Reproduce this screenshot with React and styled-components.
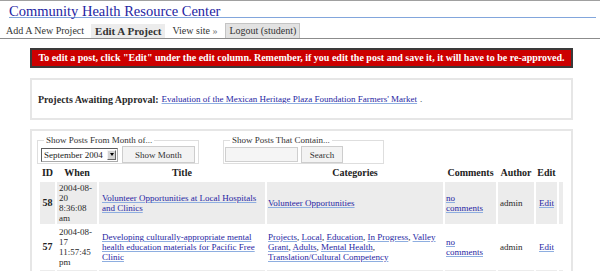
import React from 'react';
import styled, { createGlobalStyle } from 'styled-components';

const SerifStack = '"Liberation Serif", "DejaVu Serif", serif';
const LinkColor = '#1f1fa3';
const LinkLine = '#8eaee0';
const RowGray = '#ececec';

const GlobalStyle = createGlobalStyle`
  html, body {
    margin: 0;
    padding: 0;
    background: #fff;
  }
  body {
    font-family: ${SerifStack};
    color: #2a2a2a;
  }
`;

const Page = styled.div`
  width: 600px;
  height: 271px;
  overflow: hidden;
  border-top: 1px solid #a0a0a0;
  box-sizing: border-box;
`;

const SiteTitle = styled.h1`
  margin: 4px 4px 0 9px;
  height: 12px;
  line-height: 12px;
  font-size: 14.5px;
  font-weight: normal;
  color: #2424a2;
  border-bottom: 1px solid #82a6dc;
  white-space: nowrap;
`;

const Menu = styled.ul`
  display: flex;
  align-items: flex-end;
  gap: 3px;
  list-style: none;
  margin: 0;
  padding: 5px 0 0 2px;
  border-bottom: 1px solid #8c8c8c;
`;

const MenuItem = styled.li`
  height: 14px;
  padding: 0 ${(p) => (p.$boxed ? 3 : 4)}px;
  font-size: ${(p) => (p.$current ? 11 : 10)}px;
  line-height: 14px;
  font-weight: ${(p) => (p.$current ? 'bold' : 'normal')};
  color: #333;
  background: ${(p) =>
    p.$current ? '#ececec' : p.$boxed ? '#e2e2e2' : 'transparent'};
  border: ${(p) => (p.$boxed ? '1px solid #c4c4c4' : 'none')};
  border-bottom: none;
  margin-left: ${(p) => (p.$boxed ? 1 : 0)}px;
  white-space: nowrap;
`;

const Raquo = styled.span`
  color: #777;
`;

const Notice = styled.div`
  margin: 9px 27px 0 30px;
  height: 16px;
  line-height: 16px;
  border: 2px solid #3a3a3a;
  background: #cc0000;
  color: #fff;
  font-size: 10px;
  font-weight: bold;
  text-align: center;
  white-space: nowrap;
`;

const Panel = styled.div`
  margin: ${(p) => p.$gap}px 27px 0 30px;
  border: 2px solid #e6e6e6;
`;

const AwaitingPanel = styled(Panel)`
  height: 42px;
  box-sizing: border-box;
  display: flex;
  align-items: center;
  padding-left: 6px;
  white-space: nowrap;
`;

const Label = styled.strong`
  font-size: 10px;
  margin-right: 3px;
`;

const Link = styled.a`
  color: ${LinkColor};
  font-size: 9px;
  text-decoration: underline;
  text-decoration-color: ${LinkLine};
  text-underline-offset: 1px;
`;

const Trail = styled.span`
  font-size: 9px;
  margin-left: 3px;
`;

const PostsPanel = styled(Panel)`
  padding: 4px 6px 0 5px;
  height: 200px;
`;

const FilterRow = styled.div`
  display: flex;
  align-items: flex-start;
  gap: 24px;
`;

const FilterSet = styled.fieldset`
  margin: 0;
  width: ${(p) => p.$width}px;
  box-sizing: border-box;
  border: 1px solid #dedede;
  padding: 1px 2px 0 ${(p) => p.$indent}px;
  display: flex;
  align-items: center;
  gap: ${(p) => p.$gap}px;
`;

const FilterLegend = styled.legend`
  padding: 0 2px;
  margin-left: ${(p) => p.$shift}px;
  font-size: 9px;
  line-height: 10px;
  color: #333;
`;

const SelectWrap = styled.div`
  position: relative;
  width: 77px;
  height: 14px;
`;

const MonthSelect = styled.select`
  appearance: none;
  display: block;
  width: 100%;
  height: 100%;
  box-sizing: border-box;
  margin: 0;
  padding: 0 0 0 2px;
  border: 1px solid #5c5c5c;
  border-right-color: #aaa;
  border-bottom-color: #aaa;
  border-radius: 0;
  background: #fff;
  font-family: ${SerifStack};
  font-size: 9px;
  line-height: 12px;
  color: #222;
`;

const SelectArrow = styled.span`
  position: absolute;
  right: 2px;
  top: 2px;
  width: 9px;
  height: 10px;
  box-sizing: border-box;
  background: #d4d4d4;
  border: 1px solid;
  border-color: #f4f4f4 #666 #666 #f4f4f4;
  pointer-events: none;
  display: flex;
  align-items: center;
  justify-content: center;

  &::after {
    content: '';
    border-left: 2.5px solid transparent;
    border-right: 2.5px solid transparent;
    border-top: 3px solid #000;
  }
`;

const FormButton = styled.button`
  width: ${(p) => p.$width}px;
  height: 17px;
  margin: 0;
  padding: 0;
  border: 1px solid #cdcdcd;
  border-radius: 0;
  background: #f3f3f3;
  font-family: ${SerifStack};
  font-size: 9px;
  color: #333;
`;

const SearchInput = styled.input`
  width: 73px;
  height: 15px;
  box-sizing: border-box;
  margin: 0;
  border: 1px solid #cfcfcf;
  border-radius: 0;
  background: #f5f5f5;
`;

const PostsTable = styled.table`
  table-layout: fixed;
  width: 527px;
  border-spacing: 2px;
  margin-left: 1px;
  font-size: 9px;
  line-height: 10px;
  color: #2a2a2a;
`;

const Col = styled.col`
  width: ${(p) => p.$w}px;
`;

const HeadCell = styled.th`
  height: 14px;
  padding: 0;
  font-size: 10px;
  line-height: 14px;
  font-weight: bold;
  text-align: center;
  color: #222;
  white-space: nowrap;
`;

const PostRow = styled.tr`
  height: 42px;

  & > td,
  & > th {
    background: ${(p) => (p.$alt ? RowGray : 'transparent')};
  }
`;

const IdCell = styled.th`
  padding: 0;
  font-size: 10px;
  text-align: center;
  color: #222;
`;

const Cell = styled.td`
  padding: 1px ${(p) => p.$right ?? 1}px 1px ${(p) => p.$left ?? 2}px;
  vertical-align: middle;
  text-align: ${(p) => (p.$center ? 'center' : 'left')};
`;

const posts = [
  {
    id: 58,
    day: '2004-08-',
    dd: '20',
    time: '8:36:08 am',
    title: 'Volunteer Opportunities at Local Hospitals and Clinics',
    cats: ['Volunteer Opportunities'],
    alt: true,
  },
  {
    id: 57,
    day: '2004-08-',
    dd: '17',
    time: '11:57:45 pm',
    title:
      'Developing culturally-appropriate mental health education materials for Pacific Free Clinic',
    cats: [
      'Projects',
      'Local',
      'Education',
      'In Progress',
      'Valley Grant',
      'Adults',
      'Mental Health',
      'Translation/Cultural Competency',
    ],
  },
];

const columns = [15, 40, 166, 176, 51, 36, 21, 4];

export default function App() {
  return (
    <Page>
      <GlobalStyle />
      <SiteTitle>Community Health Resource Center</SiteTitle>
      <Menu>
        <MenuItem>Add A New Project</MenuItem>
        <MenuItem $current>Edit A Project</MenuItem>
        <MenuItem>
          View site <Raquo>»</Raquo>
        </MenuItem>
        <MenuItem $boxed>Logout (student)</MenuItem>
      </Menu>

      <Notice>
        To edit a post, click "Edit" under the edit column. Remember, if you
        edit the post and save it, it will have to be re-approved.
      </Notice>

      <AwaitingPanel $gap={10}>
        <Label>Projects Awaiting Approval:</Label>
        <Link href="#">
          Evaluation of the Mexican Heritage Plaza Foundation Farmers' Market
        </Link>
        <Trail>.</Trail>
      </AwaitingPanel>

      <PostsPanel $gap={9}>
        <FilterRow>
          <FilterSet $width={162} $indent={3} $gap={4}>
            <FilterLegend $shift={3}>Show Posts From Month of...</FilterLegend>
            <SelectWrap>
              <MonthSelect defaultValue="200409">
                <option value="200409">September 2004</option>
                <option value="200408">August 2004</option>
              </MonthSelect>
              <SelectArrow />
            </SelectWrap>
            <FormButton $width={73}>Show Month</FormButton>
          </FilterSet>
          <FilterSet $width={161} $indent={1} $gap={3}>
            <FilterLegend $shift={5}>Show Posts That Contain...</FilterLegend>
            <SearchInput type="text" />
            <FormButton $width={42}>Search</FormButton>
          </FilterSet>
        </FilterRow>

        <PostsTable>
          <colgroup>
            {columns.map((w, i) => (
              <Col key={i} $w={w} />
            ))}
          </colgroup>
          <thead>
            <tr>
              <HeadCell>ID</HeadCell>
              <HeadCell>When</HeadCell>
              <HeadCell>Title</HeadCell>
              <HeadCell>Categories</HeadCell>
              <HeadCell>Comments</HeadCell>
              <HeadCell>Author</HeadCell>
              <HeadCell>Edit</HeadCell>
              <HeadCell />
            </tr>
          </thead>
          <tbody>
            {posts.map((post) => (
              <PostRow key={post.id} $alt={post.alt}>
                <IdCell scope="row">{post.id}</IdCell>
                <Cell>
                  {post.day}
                  <wbr />
                  {post.dd} {post.time}
                </Cell>
                <Cell $left={3}>
                  <Link href="#">{post.title}</Link>
                </Cell>
                <Cell $left={1}>
                  {post.cats.map((c, i) => (
                    <React.Fragment key={c}>
                      {i > 0 && ', '}
                      <Link href="#">{c}</Link>
                    </React.Fragment>
                  ))}
                </Cell>
                <Cell $left={1} $right={4}>
                  <Link href="#">no comments</Link>
                </Cell>
                <Cell>admin</Cell>
                <Cell $left={0} $right={0} $center>
                  <Link href="#">Edit</Link>
                </Cell>
                <Cell $left={0} $right={0} />
              </PostRow>
            ))}
            <PostRow $alt>
              <Cell />
              <Cell />
              <Cell />
              <Cell />
              <Cell />
              <Cell />
              <Cell />
              <Cell />
            </PostRow>
          </tbody>
        </PostsTable>
      </PostsPanel>
    </Page>
  );
}
